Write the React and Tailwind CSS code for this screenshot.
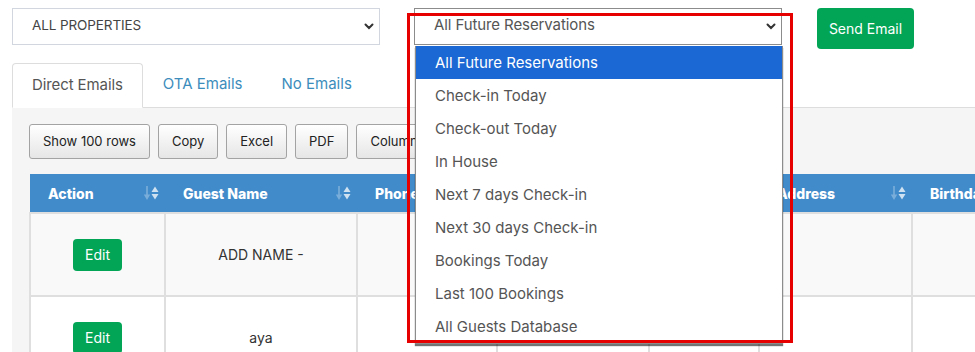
import React from "react";

const options = [
  "All Future Reservations",
  "Check-in Today",
  "Check-out Today",
  "In House",
  "Next 7 days Check-in",
  "Next 30 days Check-in",
  "Bookings Today",
  "Last 100 Bookings",
  "All Guests Database",
];

// labels of the columns hidden behind the open dropdown are left blank
const columns = [
  { label: "Action", width: 135, sort: true },
  { label: "Guest Name", width: 192, sort: true },
  { label: "Phone", width: 140, sort: false },
  { label: "", width: 152, sort: false },
  { label: "", width: 110, sort: false },
  { label: "Address", width: 153, sort: true },
  { label: "Birthday", width: 200, sort: false },
];

const Chevron = () => (
  <svg width="10" height="7" viewBox="0 0 10 7" className="shrink-0">
    <path d="M1.5 1.5 L5 5 L8.5 1.5" fill="none" stroke="#333" strokeWidth="2" strokeLinecap="round" />
  </svg>
);

const SortIcon = () => (
  <svg width="16" height="16" viewBox="0 0 16 16" className="shrink-0">
    <g fill="#ffffff" opacity="0.3">
      <rect x="3.2" y="1" width="1.6" height="10" />
      <polygon points="0.8,9.5 7.2,9.5 4,15" />
    </g>
    <g fill="#ffffff" opacity="0.75">
      <polygon points="8.5,7 15.5,7 12,1.5" />
      <polygon points="8.5,9 15.5,9 12,14.5" />
    </g>
  </svg>
);

const ToolButton = ({ children }) => (
  <button className="h-[35px] px-[13px] border border-[#a3a3a3] rounded-[3px] bg-gradient-to-b from-white to-[#e6e6e6] text-[13px] text-[#222] whitespace-nowrap">
    {children}
  </button>
);

const EditButton = () => (
  <button className="w-[49px] h-[32px] rounded-[4px] bg-[#02a556] text-white text-[14px]">Edit</button>
);

const Row = ({ name, striped }) => (
  <tr className={(striped ? "bg-[#f9f9f9]" : "bg-white") + " h-[83px]"}>
    <td className="border-2 border-[#dfdfdf] text-center">
      <EditButton />
    </td>
    <td className="border-2 border-[#dfdfdf] text-center text-[14px]">{name}</td>
    <td className="border-2 border-[#dfdfdf]"></td>
    <td className="border-2 border-[#dfdfdf]"></td>
    <td className="border-2 border-[#dfdfdf]"></td>
    <td className="border-2 border-[#dfdfdf]"></td>
    <td className="border-2 border-[#dfdfdf]"></td>
  </tr>
);

export default function App() {
  return (
    <div className="relative w-[975px] h-[352px] overflow-hidden bg-white font-['Inter',sans-serif] text-[#333]">
      {/* top filters */}
      <div className="flex items-start pt-2 pl-3">
        <div className="w-[368px] h-[37px] border border-[#d2d6de] flex items-center justify-between pl-[19px] pr-[5px]">
          <span className="self-start pt-[6px] text-[13.5px] text-[#444] tracking-[-0.1px]">ALL PROPERTIES</span>
          <Chevron />
        </div>

        <div className="relative ml-[34px] w-[368px]">
          <div className="h-[37px] border border-[#8c8c8c] flex items-center justify-between pl-[19px] pr-[5px]">
            <span className="self-start pt-[5px] text-[15px] text-[#555] tracking-[-0.1px]">All Future Reservations</span>
            <Chevron />
          </div>
          <ul className="absolute left-[1px] top-[38px] w-[368px] bg-white border-x border-b border-[#8c8c8c] shadow-[0_2px_1px_rgba(0,0,0,0.55)] z-10">
            {options.map((o, i) => (
              <li
                key={o}
                className={
                  "h-[33px] flex items-center pl-[19px] pt-[1px] text-[15px] " +
                  (i === 0 ? "bg-[#1b67d3] text-white" : "text-[#555]")
                }
              >
                {o}
              </li>
            ))}
          </ul>
        </div>

        <button className="ml-[35px] w-[97px] h-[41px] rounded-[4px] bg-[#02a556] text-white text-[14px]">
          Send Email
        </button>
      </div>

      {/* tabs */}
      <div className="mt-[13px] ml-3 flex items-end border-b border-[#dddddd]">
        <div className="h-[45px] -mb-px px-[19px] flex items-center bg-white border border-b-white border-[#dddddd] rounded-t-[4px] text-[15px] text-[#555] tracking-[-0.1px]">
          Direct Emails
        </div>
        <div className="h-[45px] px-[20px] flex items-center text-[15px] text-[#3c8dbc]">OTA Emails</div>
        <div className="h-[45px] px-[19px] flex items-center text-[15px] text-[#3c8dbc]">No Emails</div>
      </div>

      {/* panel */}
      <div className="ml-3 bg-[#f5f5f5] pl-[17px] pt-[16px] h-[300px]">
        <div className="flex gap-[8px]">
          <ToolButton>Show 100 rows</ToolButton>
          <ToolButton>Copy</ToolButton>
          <ToolButton>Excel</ToolButton>
          <ToolButton>PDF</ToolButton>
          <ToolButton>Column visibility</ToolButton>
        </div>

        <table className="mt-[15px] table-fixed border-collapse w-[1082px]">
          <colgroup>
            {columns.map((c, i) => (
              <col key={i} style={{ width: c.width }} />
            ))}
          </colgroup>
          <thead>
            <tr className="bg-[#418bca] h-[39px] border-b border-black">
              {columns.map((c, i) => (
                <th key={i} className="pl-[18px] pr-[6px] text-left text-white text-[14px] font-extrabold">
                  <div className="flex items-center justify-between">
                    <span className="whitespace-nowrap">{c.label}</span>
                    {c.sort && <SortIcon />}
                  </div>
                </th>
              ))}
            </tr>
          </thead>
          <tbody>
            <Row name="ADD NAME -" striped />
            <Row name="aya" />
          </tbody>
        </table>
      </div>

      {/* annotation box */}
      <div className="absolute left-[407px] top-[13px] w-[386px] h-[330px] border-[3px] border-[#e60000] z-20 pointer-events-none"></div>
    </div>
  );
}
